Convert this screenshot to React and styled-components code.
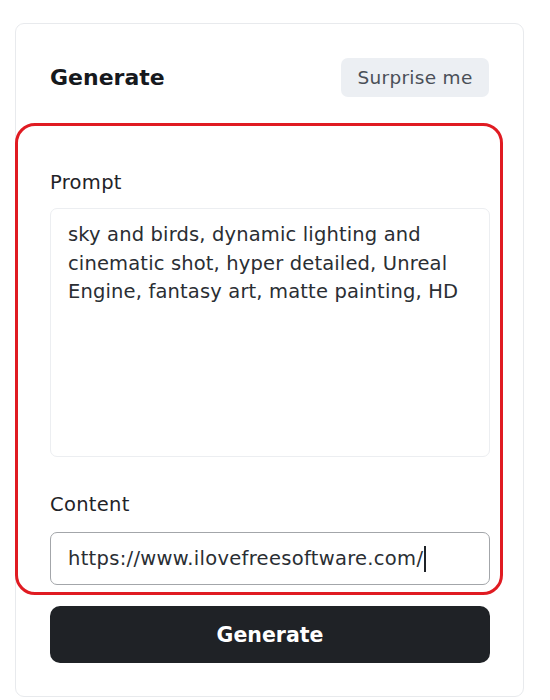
import React from 'react'
import styled, { createGlobalStyle } from 'styled-components'

const Global = createGlobalStyle`
  * { box-sizing: border-box; }
  body {
    margin: 0;
    background: #ffffff;
    font-family: "DejaVu Sans", "Noto Sans", sans-serif;
    color: #1f2328;
  }
`

const PROMPT = 'sky and birds, dynamic lighting and\ncinematic shot, hyper detailed, Unreal\nEngine, fantasy art, matte painting, HD'

function App() {
  return (
    <Page>
      <Global />
      <Card>
        <Header>
          <Title>Generate</Title>
          <Surprise>Surprise me</Surprise>
        </Header>
        <Highlight>
          <Label>Prompt</Label>
          <PromptBox readOnly value={PROMPT} />
          <Label className='second'>Content</Label>
          <UrlField>
            https://www.ilovefreesoftware.com/<Caret />
          </UrlField>
        </Highlight>
        <Submit>Generate</Submit>
      </Card>
    </Page>
  )
}

export default App

const Page = styled.div`
  padding: 23px 0 0 15px;
  width: 550px;
  height: 700px;
  overflow: hidden;
`

const Card = styled.div`
  width: 509px;
  border: 1px solid #e8eaed;
  border-radius: 9px;
  padding: 34px 34px 33px 34px;
  display: flex;
  flex-direction: column;
`

const Header = styled.div`
  display: flex;
  justify-content: space-between;
  align-items: center;
  height: 39px;
`

const Title = styled.h2`
  margin: 0;
  font-size: 22px;
  font-weight: 700;
  color: #16191d;
`

const Surprise = styled.button`
  height: 39px;
  width: 148px;
  border: none;
  border-radius: 7px;
  background: #eceff3;
  color: #4a4f58;
  font-family: inherit;
  font-size: 18.5px;
  letter-spacing: 0.3px;
  padding: 0;
`

const Highlight = styled.section`
  margin: 26px -14px 0 -35px;
  border: 3px solid #e01b22;
  border-radius: 20px;
  padding: 46px 18px 7px 32px;
  display: flex;
  flex-direction: column;
`

const Label = styled.div`
  font-size: 19.5px;
  letter-spacing: 0.3px;
  color: #1f2328;
  line-height: 22px;
  margin-bottom: 14px;
  &.second { margin-top: 37px; margin-bottom: 16px; }
`

const PromptBox = styled.textarea`
  width: 440px;
  height: 249px;
  resize: none;
  border: 1px solid #eceef1;
  border-radius: 7px;
  padding: 12px 17px;
  font-family: inherit;
  font-size: 19.5px;
  letter-spacing: 0.15px;
  line-height: 28.5px;
  color: #2a2e33;
  outline: none;
  overflow: hidden;
`

const UrlField = styled.div`
  width: 440px;
  height: 53px;
  border: 1.5px solid #a3a6aa;
  border-radius: 7px;
  padding: 0 17px;
  display: flex;
  align-items: center;
  font-size: 19.5px;
  letter-spacing: 0.3px;
  color: #2a2e33;
`

const Caret = styled.span`
  display: inline-block;
  width: 1.5px;
  height: 26px;
  background: #1f2328;
  margin-left: 1px;
`

const Submit = styled.button`
  margin-top: 11px;
  height: 57px;
  width: 440px;
  border: none;
  border-radius: 10px;
  background: #1f2226;
  color: #ffffff;
  font-family: inherit;
  font-size: 20.5px;
  font-weight: 700;
`
